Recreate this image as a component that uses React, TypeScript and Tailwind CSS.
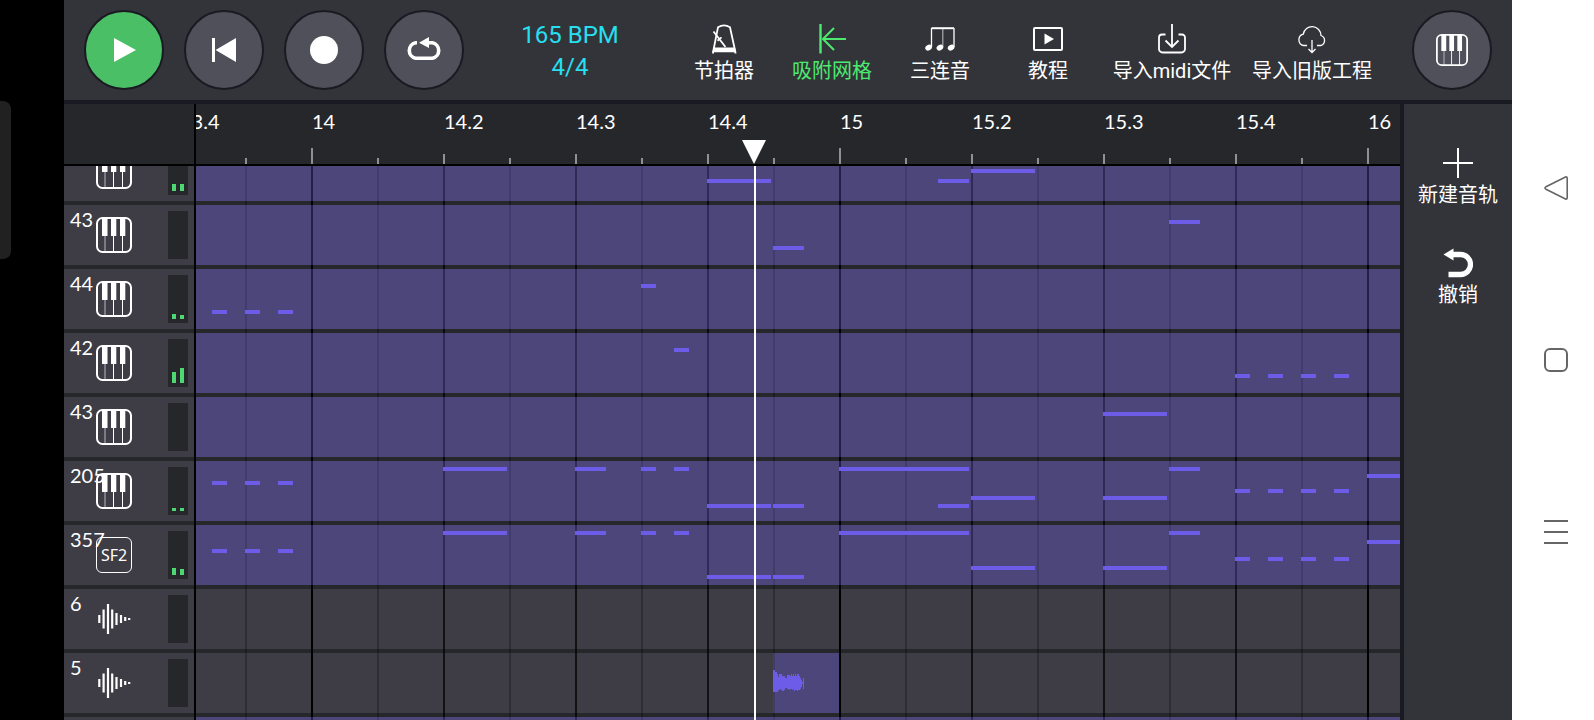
import clsx from 'clsx';
import type { ReactNode } from 'react';

type Note = { step: number; len: number; y: number };

type Track = {
  name: string;
  kind: 'piano' | 'sf2' | 'audio';
  levels?: [number, number];
  filled?: boolean;
  wave?: boolean;
  notes?: Note[];
};

// one step is a sixteenth of a bar, bar 14 starts at step 0
const STEP = 33;
const BAR_START = 115;
const LAST_BAR = 16;

const stepX = (step: number) => BAR_START + Math.round(step * STEP);

const run = (steps: number[], len: number, y: number): Note[] =>
  steps.map((step) => ({ step, len, y }));

const tracks: Track[] = [
  {
    name: '',
    kind: 'piano',
    levels: [7, 7],
    filled: true,
    notes: [...run([12], 2, 38), ...run([19], 1, 38), ...run([20], 2, 28)],
  },
  {
    name: '43',
    kind: 'piano',
    filled: true,
    notes: [...run([14], 1, 41), ...run([26], 1, 15)],
  },
  {
    name: '44',
    kind: 'piano',
    levels: [5, 4],
    filled: true,
    notes: [...run([-3, -2, -1], 0.5, 41), ...run([10], 0.5, 15)],
  },
  {
    name: '42',
    kind: 'piano',
    levels: [11, 15],
    filled: true,
    notes: [...run([11], 0.5, 15), ...run([28, 29, 30, 31], 0.5, 41)],
  },
  {
    name: '43',
    kind: 'piano',
    filled: true,
    notes: run([24], 2, 15),
  },
  {
    name: '205',
    kind: 'piano',
    levels: [3, 3],
    filled: true,
    notes: [
      ...run([-3, -2, -1], 0.5, 20),
      ...run([4], 2, 6),
      ...run([8], 1, 6),
      ...run([10, 11], 0.5, 6),
      ...run([12], 2, 43),
      ...run([14, 19], 1, 43),
      ...run([16], 4, 6),
      ...run([20, 24], 2, 35),
      ...run([26], 1, 6),
      ...run([28, 29, 30, 31], 0.5, 28),
      ...run([32], 2, 13),
    ],
  },
  {
    name: '357',
    kind: 'sf2',
    levels: [7, 6],
    filled: true,
    notes: [
      ...run([-3, -2, -1], 0.5, 24),
      ...run([4], 2, 6),
      ...run([8], 1, 6),
      ...run([10, 11], 0.5, 6),
      ...run([12], 2, 50),
      ...run([14], 1, 50),
      ...run([16], 4, 6),
      ...run([20, 24], 2, 41),
      ...run([26], 1, 6),
      ...run([28, 29, 30, 31], 0.5, 32),
      ...run([32], 2, 15),
    ],
  },
  { name: '6', kind: 'audio' },
  { name: '5', kind: 'audio', wave: true },
  { name: '', kind: 'piano', filled: true },
];

// ruler cells are half beats, starting with 13.4
const cells = Array.from({ length: 48 }, (_, i) => {
  const beat = 3 + Math.floor(i / 2);
  const bar = 13 + Math.floor(beat / 4);
  const sub = (beat % 4) + 1;
  const inSong = bar < LAST_BAR || (bar === LAST_BAR && sub === 1);
  return {
    label: i % 2 === 0 && inSong ? (sub === 1 ? `${bar}` : `${bar}.${sub}`) : '',
    type: i % 2 === 1 ? 'half' : sub === 1 ? 'bar' : 'beat',
  };
});

function PianoIcon({ className }: { className: string }) {
  return (
    <svg viewBox="0 0 36 36" className={className} fill="none" aria-hidden="true">
      <rect x="1" y="1" width="34" height="34" rx="5.5" stroke="#fff" strokeWidth="2" />
      <path d="M6 1h5.5v18H6zM15 1h5.3v18H15zM24 1h5.3v18H24z" fill="#fff" />
      <path d="M9 19v16" stroke="#fff" strokeWidth="1.6" opacity=".4" />
      <path d="M17.5 19v16M26.5 19v16" stroke="#fff" />
    </svg>
  );
}

function WaveIcon() {
  return (
    <svg viewBox="0 0 36 36" className="size-9" stroke="#fff" strokeWidth="2.2" aria-hidden="true">
      <path d="M3.3 14v8M7.6 8.5v19M12 3v30M16.2 8.5v19M20.5 12v12M25 14v8M29.2 16v4M33.2 17v2" />
    </svg>
  );
}

function CircleButton({
  label,
  active,
  children,
}: {
  label: string;
  active?: boolean;
  children: ReactNode;
}) {
  return (
    <button
      type="button"
      aria-label={label}
      className={clsx(
        'flex size-20 shrink-0 items-center justify-center rounded-full border-2 border-[#191a22]',
        active ? 'bg-[#4abf66]' : 'bg-[#50505a]'
      )}
    >
      {children}
    </button>
  );
}

function IconButton({
  label,
  className,
  children,
}: {
  label: string;
  className?: string;
  children: ReactNode;
}) {
  return (
    <button
      type="button"
      className={clsx('flex shrink-0 flex-col items-center gap-[3px]', className)}
    >
      <svg
        viewBox="0 0 30 30"
        className="size-[30px]"
        fill="none"
        stroke="currentColor"
        strokeWidth="2"
        aria-hidden="true"
      >
        {children}
      </svg>
      <span className="font-[family-name:Roboto,'Noto_Sans_CJK_SC',sans-serif] text-[20px] leading-7 whitespace-nowrap">
        {label}
      </span>
    </button>
  );
}

function Toolbar() {
  return (
    <header className="flex h-[104px] shrink-0 items-center border-b-4 border-[#191a22] bg-[#333439] px-5">
      <div className="flex gap-5">
        <CircleButton label="播放" active>
          <svg viewBox="0 0 40 40" className="size-10" fill="#fff">
            <path d="M10 8l22 12-22 12z" />
          </svg>
        </CircleButton>
        <CircleButton label="回到开头">
          <svg viewBox="0 0 40 40" className="size-10" fill="#fff">
            <path d="M8 8h3v24H8zM11.5 20L32 8v24z" />
          </svg>
        </CircleButton>
        <CircleButton label="录音">
          <svg viewBox="0 0 40 40" className="size-10" fill="#fff">
            <circle cx="20" cy="20" r="14" />
          </svg>
        </CircleButton>
        <CircleButton label="循环">
          <svg viewBox="0 0 40 40" className="size-10" fill="none">
            <path
              d="M13 12.7h-1.5a8 8 0 0 0 0 15.6h17a8 8 0 0 0 0-15.6H24"
              stroke="#fff"
              strokeWidth="3.6"
            />
            <path d="M15 12.7L25 7v11z" fill="#fff" />
          </svg>
        </CircleButton>
      </div>

      <button
        type="button"
        className="flex-1 pt-0.5 pl-1.5 font-[family-name:Roboto,sans-serif] text-2xl leading-8 text-[#26dff0]"
      >
        <span className="block">165 BPM</span>
        <span className="block">4/4</span>
      </button>

      <nav className="flex self-start pt-6 text-white">
        <IconButton label="节拍器" className="w-[108px]">
          <path d="M4 28.5L9 3.2Q15-.6 21 3.2l5.5 25.3" strokeWidth="1.8" />
          <path d="M4.6 23.5h21.3L27.5 29.5H25.5V28.300H5V29.5H3z" fill="currentColor" stroke="none" />
          <path d="M4.5 7.5L16.5 23M8.5 16.8l4-3.4" strokeWidth="1.8" />
        </IconButton>
        <IconButton label="吸附网格" className="w-[108px] text-[#4cea6f]">
          <path d="M3.5 0v29.5" strokeWidth="2.4" />
          <path d="M17 4L6 15l11 11M6 15h23" />
        </IconButton>
        <IconButton label="三连音" className="w-[108px]">
          <path d="M6.5 4.2h22.5" />
          <path d="M6.5 4v19M29 4v19" strokeWidth="1.3" />
          <path d="M17.8 4v19" strokeWidth="1.2" opacity=".6" />
          <g fill="currentColor" stroke="none">
            <ellipse cx="3.6" cy="23.6" rx="3.5" ry="2.7" transform="rotate(-30 3.6 23.6)" />
            <ellipse cx="14.9" cy="23.6" rx="3.5" ry="2.7" transform="rotate(-30 14.9 23.6)" />
            <ellipse cx="26.1" cy="23.6" rx="3.5" ry="2.7" transform="rotate(-30 26.1 23.6)" />
          </g>
        </IconButton>
        <IconButton label="教程" className="w-[108px]">
          <rect x="1" y="4" width="28" height="22" rx="1" />
          <path d="M11.5 9.5l9.5 5.5-9.5 5.5z" fill="currentColor" stroke="none" />
        </IconButton>
        <IconButton label="导入midi文件" className="w-[140px]">
          <path
            d="M8.5 10.5H5a3 3 0 0 0-3 3V25a3.5 3.5 0 0 0 3.5 3.5h19A3.5 3.5 0 0 0 28 25V13.5a3 3 0 0 0-3-3h-3.5"
            strokeWidth="1.8"
          />
          <path d="M15 0v23M8.5 16.5L15 23l6.5-6.5" strokeWidth="1.8" />
        </IconButton>
        <IconButton label="导入旧版工程" className="w-[140px]">
          <path
            d="M10 21.5H6.5A5.8 5.8 0 0 1 6.3 10.2 8.9 8.9 0 0 1 24 11.5a5.2 5.2 0 0 1-.5 10H20"
            strokeWidth="1.3"
          />
          <path d="M15 16v12.5M11.5 25l3.5 3.5 3.5-3.5" strokeWidth="1.3" />
        </IconButton>
      </nav>

      <div className="pl-[30px]">
        <CircleButton label="键盘">
          <PianoIcon className="size-8" />
        </CircleButton>
      </div>
    </header>
  );
}

function TrackHeader({ track }: { track: Track }) {
  return (
    <div className="flex h-[60px] shrink-0 items-start justify-between bg-[#3e3c45] pr-1.5 pl-1.5">
      <div className="flex">
        {/* long names run over the icon */}
        <span className="relative z-10 w-[26px] pt-0.5 text-[20px] leading-6 text-white">
          {track.name}
        </span>
        <button type="button" aria-label={`音轨 ${track.name}`} className="mt-3 size-9">
          {track.kind === 'piano' && <PianoIcon className="size-9" />}
          {track.kind === 'audio' && <WaveIcon />}
          {track.kind === 'sf2' && (
            <span className="flex size-9 items-center justify-center rounded-md border border-white font-['Noto_Sans',sans-serif] text-base text-white">
              SF2
            </span>
          )}
        </button>
      </div>
      <div className="mt-1.5 flex h-12 w-5 items-end justify-center gap-1 bg-[#26272b] pb-1">
        {track.levels?.map((level, i) => (
          <div key={i} className="w-1 bg-[#4cd971]" style={{ height: level }} />
        ))}
      </div>
    </div>
  );
}

function Lane({ track }: { track: Track }) {
  return (
    <div className="relative h-[60px] shrink-0 bg-[#3e3c45]">
      {track.filled && <div className="absolute inset-0 z-20 bg-[#6c5ce7]/33" />}
      {track.wave && (
        <div
          className="absolute inset-y-0 z-20 flex items-center bg-[#6c5ce7]/33"
          style={{ left: stepX(14), width: 2 * STEP }}
        >
          <svg viewBox="0 0 34 22" className="-mt-1 h-[22px] w-[34px]" fill="#6c5ce7">
            <path d="M0 0h2v2h2v2h1v3h1V4h3v2h3v2h2V5h3v1h1V4h1v2h1V4h1v2h1V4h1v2h1V4h2v2h1v2h1v2h1v2h1V8h1v11h-1v-5h-1v3h-1v2h-1v1h-2v1h-1v-1h-2v1h-1v-2h-1v1h-1v-1h-2v1h-1v-1h-2v-1h-2v2h-1v1h-2v-1h-1v-1H7v1H5v2H0z" />
          </svg>
        </div>
      )}
      {track.notes?.map((note) => (
        <div
          key={`${note.step}-${note.y}`}
          className="absolute z-20 h-1 bg-[#6c5ce7]"
          style={{
            left: stepX(note.step),
            top: note.y,
            width: Math.round(note.len * STEP - 2),
          }}
        />
      ))}
    </div>
  );
}

function Ruler() {
  return (
    <div className="flex h-full min-w-0 flex-1 overflow-hidden bg-[#26272b]">
      <div className="-ml-[17px] flex">
        {cells.map((cell, i) => (
          <div key={i} className="flex w-[66px] shrink-0 flex-col justify-between pt-[5px]">
            <span className="pl-px text-[20px] leading-6 text-white">
              {cell.label}
            </span>
            <i
              className={clsx(
                'w-0.5 bg-[#8f9092]',
                cell.type === 'bar' && 'h-4',
                cell.type === 'beat' && 'h-2.5',
                cell.type === 'half' && 'h-1.5'
              )}
            />
          </div>
        ))}
      </div>
    </div>
  );
}

function GridLines() {
  return (
    <div className="pointer-events-none absolute inset-0 z-10 overflow-hidden">
      <div className="-ml-[17px] flex h-full">
        {cells.map((cell, i) => (
          <div
            key={i}
            className={clsx(
              'w-[66px] shrink-0 border-l-2',
              cell.type === 'bar' && 'border-black',
              cell.type === 'beat' && 'border-black/70',
              cell.type === 'half' && 'border-black/25'
            )}
          />
        ))}
      </div>
    </div>
  );
}

function Arranger() {
  return (
    <main className="relative flex min-w-0 flex-1 flex-col bg-[#26272b]">
      <div className="flex h-[62px] shrink-0 border-b-2 border-black">
        <div className="w-[132px] shrink-0 border-r-2 border-black" />
        <Ruler />
      </div>
      <div className="flex min-h-0 flex-1 overflow-hidden">
        <div className="w-[132px] shrink-0 border-r-2 border-black">
          <div className="-mt-[25px] flex flex-col gap-1">
            {tracks.map((track, i) => (
              <TrackHeader key={i} track={track} />
            ))}
          </div>
        </div>
        <div className="relative min-w-0 flex-1 overflow-hidden">
          <div className="-mt-[25px] flex flex-col gap-1">
            {tracks.map((track, i) => (
              <Lane key={i} track={track} />
            ))}
          </div>
          <GridLines />
        </div>
      </div>

      {/* playhead */}
      <div className="absolute inset-y-0 left-[678px] z-30 flex w-6 flex-col items-center pt-9">
        <svg viewBox="0 0 24 24" className="size-6 shrink-0" fill="#fff">
          <path d="M0 0h24L12 24z" />
        </svg>
        <div className="mt-0.5 w-0.5 flex-1 translate-x-px bg-white" />
      </div>
    </main>
  );
}

export default function App() {
  return (
    <div className="flex h-screen overflow-hidden bg-black font-[family-name:Lato,'Noto_Sans_CJK_SC',sans-serif]">
      <div className="w-16 shrink-0 pt-[101px]">
        <div className="h-[158px] w-[11px] rounded-r-lg bg-[#212121]" />
      </div>

      <div className="flex min-w-0 flex-1 flex-col">
        <Toolbar />
        <div className="flex min-h-0 flex-1">
          <Arranger />
          <aside className="flex w-28 shrink-0 flex-col items-center gap-[39px] border-l-4 border-[#191a22] bg-[#333439] pt-11 text-white">
            <IconButton label="新建音轨">
              <path d="M15 0v30M0 15h30" />
            </IconButton>
            <IconButton label="撤销">
              <path d="M10 6.5h7.5a10 10 0 0 1 0 20H5.5" strokeWidth="5.3" />
              <path d="M.5 6.5l10-6v12z" fill="currentColor" stroke="none" />
            </IconButton>
          </aside>
        </div>
      </div>

      <nav className="flex w-[82px] shrink-0 flex-col items-center justify-center gap-[148px] bg-white pl-1.5 text-[#666]">
        <button type="button" aria-label="返回">
          <svg viewBox="0 0 24 24" className="size-6" fill="none" stroke="currentColor" strokeWidth="1.6">
            <path d="M21.5 1L2 10.7q-2 1.3 0 2.6L21.5 23q1.7.6 1.7-1.5V2.5q0-2.1-1.7-1.5z" />
          </svg>
        </button>
        <button type="button" aria-label="主页">
          <svg viewBox="0 0 24 24" className="size-6" fill="none" stroke="currentColor" strokeWidth="2">
            <rect x="1" y="1" width="22" height="22" rx="5" />
          </svg>
        </button>
        <button type="button" aria-label="最近任务">
          <svg viewBox="0 0 24 24" className="size-6" fill="none" stroke="currentColor" strokeWidth="2">
            <path d="M0 1h24M0 12h24M0 23h24" />
          </svg>
        </button>
      </nav>
    </div>
  );
}
